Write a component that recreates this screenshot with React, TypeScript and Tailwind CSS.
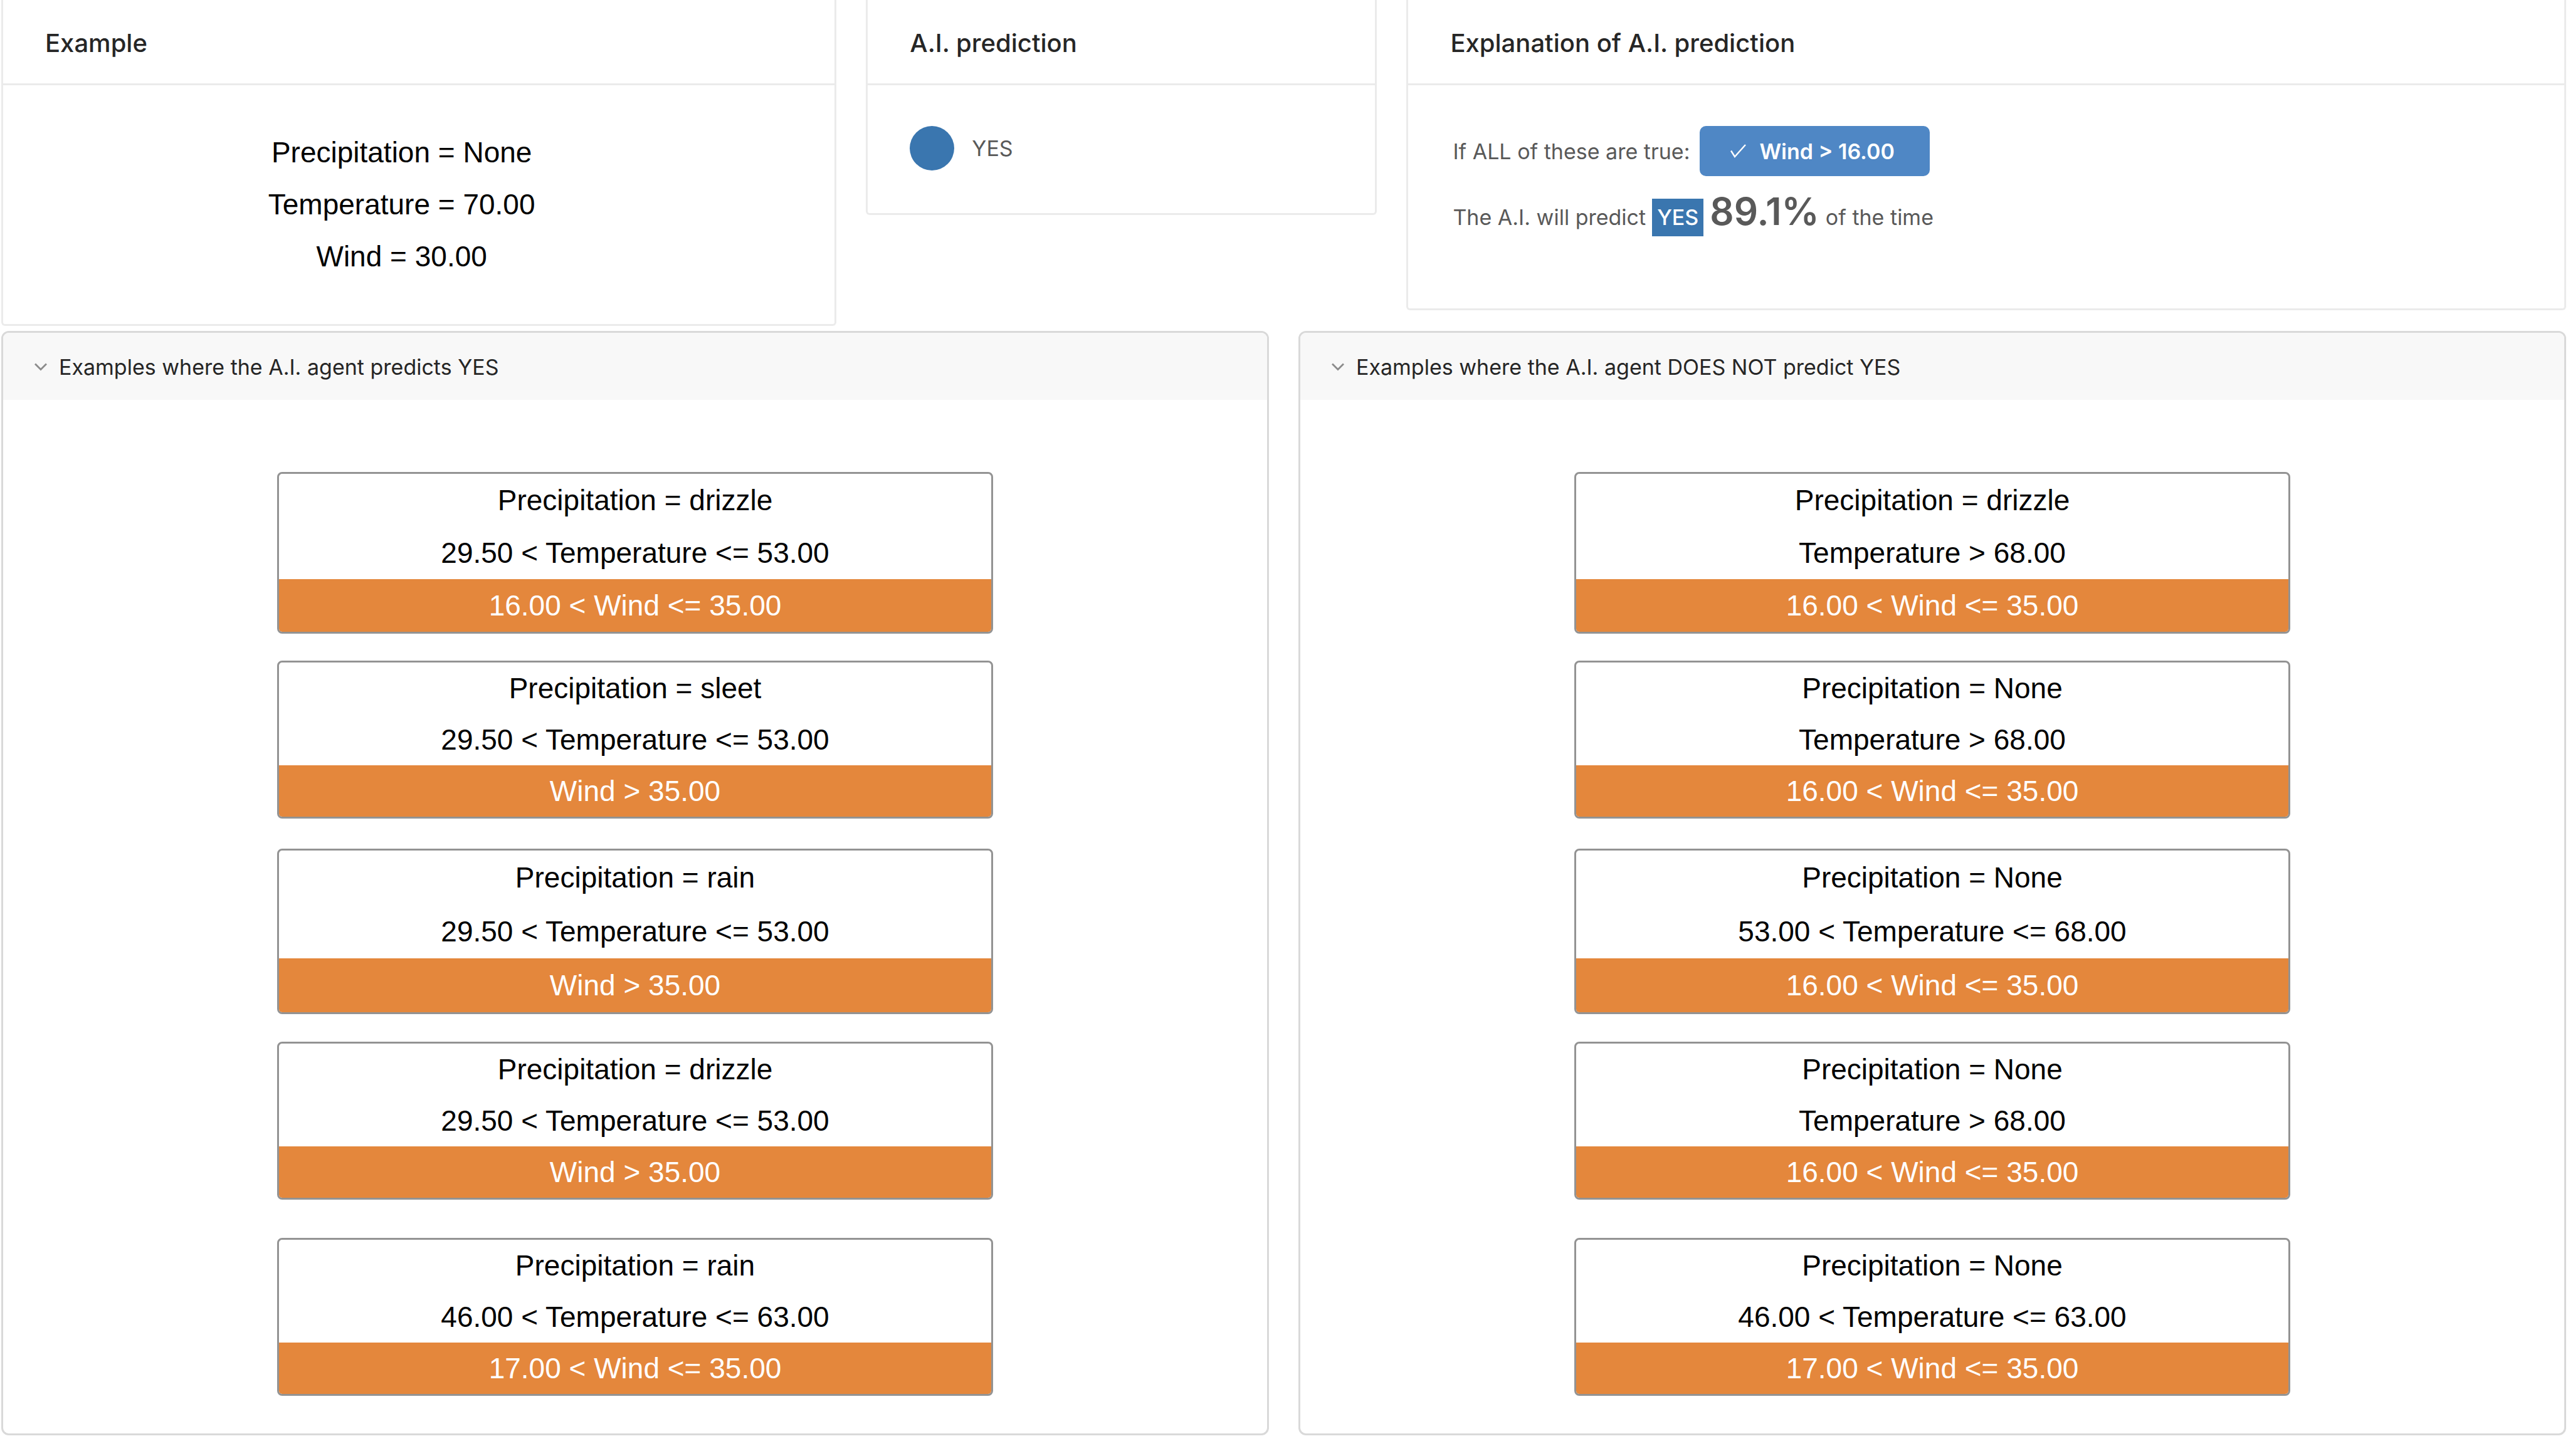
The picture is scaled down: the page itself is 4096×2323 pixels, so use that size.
import type { ReactNode } from "react";

type Example = {
  lines: [string, string];
  wind: string;
};

type Row = {
  spacing: string;
  leading: string;
  yes: Example;
  no: Example;
};

const rows: Row[] = [
  {
    spacing: "mt-[115px]",
    leading: "leading-[84px]",
    yes: { lines: ["Precipitation = drizzle", "29.50 < Temperature <= 53.00"], wind: "16.00 < Wind <= 35.00" },
    no: { lines: ["Precipitation = drizzle", "Temperature > 68.00"], wind: "16.00 < Wind <= 35.00" },
  },
  {
    spacing: "mt-[43px]",
    leading: "leading-[82px]",
    yes: { lines: ["Precipitation = sleet", "29.50 < Temperature <= 53.00"], wind: "Wind > 35.00" },
    no: { lines: ["Precipitation = None", "Temperature > 68.00"], wind: "16.00 < Wind <= 35.00" },
  },
  {
    spacing: "mt-[48px]",
    leading: "leading-[86px]",
    yes: { lines: ["Precipitation = rain", "29.50 < Temperature <= 53.00"], wind: "Wind > 35.00" },
    no: { lines: ["Precipitation = None", "53.00 < Temperature <= 68.00"], wind: "16.00 < Wind <= 35.00" },
  },
  {
    spacing: "mt-[44px]",
    leading: "leading-[82px]",
    yes: { lines: ["Precipitation = drizzle", "29.50 < Temperature <= 53.00"], wind: "Wind > 35.00" },
    no: { lines: ["Precipitation = None", "Temperature > 68.00"], wind: "16.00 < Wind <= 35.00" },
  },
  {
    spacing: "mt-[61px]",
    leading: "leading-[82px]",
    yes: { lines: ["Precipitation = rain", "46.00 < Temperature <= 63.00"], wind: "17.00 < Wind <= 35.00" },
    no: { lines: ["Precipitation = None", "46.00 < Temperature <= 63.00"], wind: "17.00 < Wind <= 35.00" },
  },
];

function CheckIcon() {
  return (
    <svg aria-hidden="true" viewBox="0 0 25 22" className="h-[22px] w-[25px]" fill="none" stroke="currentColor" strokeWidth="2.4">
      <path d="M1 10.5 L7 20 L24 1" />
    </svg>
  );
}

function ChevronIcon() {
  return (
    <svg aria-hidden="true" viewBox="0 0 20 13" className="h-[13px] w-[20px]" fill="none" stroke="currentColor" strokeWidth="2.8">
      <path d="M1 1.5 L10 10.5 L19 1.5" />
    </svg>
  );
}

function Card({ title, className, children }: { title: string; className: string; children: ReactNode }) {
  return (
    <section className={`self-start rounded-b-[6px] border-[3px] border-t-0 border-[#ebebeb] ${className}`}>
      <h2 className="border-b-[3px] border-[#ebebeb] px-[67px] pt-[38px] pb-[34px] text-[40px] leading-[61px] font-medium text-[#262626]">
        {title}
      </h2>
      {children}
    </section>
  );
}

function ExampleCard({ example, row }: { example: Example; row: Row }) {
  return (
    <li
      className={`w-[1142px] overflow-hidden rounded-[8px] border-[3px] border-[#939393] text-center font-['Liberation_Sans',sans-serif] text-[46px] text-black ${row.spacing} ${row.leading}`}
    >
      {example.lines.map((line) => (
        <p key={line}>{line}</p>
      ))}
      <p className="bg-[#e4873c] text-white">{example.wind}</p>
    </li>
  );
}

function Panel({ title, side }: { title: string; side: "yes" | "no" }) {
  return (
    <section className="flex-1 overflow-hidden rounded-[12px] border-[3px] border-[#d9d9d9] pb-[60px]">
      <h2>
        <button
          type="button"
          aria-expanded="true"
          className="flex h-[107px] w-full items-center gap-[19px] bg-[#f8f8f8] pt-[2px] pl-[50px] text-left text-[34px] leading-[54px] text-[#262626]"
        >
          <span className="text-[#8c8c8c]">
            <ChevronIcon />
          </span>
          {title}
        </button>
      </h2>
      <ul className="flex flex-col items-center">
        {rows.map((row, i) => (
          <ExampleCard key={i} example={row[side]} row={row} />
        ))}
      </ul>
    </section>
  );
}

export default function App() {
  return (
    <main className="min-h-screen bg-white pr-[3px] pl-[2px] font-['Inter',sans-serif]">
      <div className="grid h-[528px] grid-cols-24 gap-x-[47px]">
        <Card title="Example" className="col-span-8">
          <div className="pt-[66px] pr-[55px] pb-[66px] text-center font-['Liberation_Sans',sans-serif] text-[46px] leading-[83px] text-black">
            <p>Precipitation = None</p>
            <p>Temperature = 70.00</p>
            <p>Wind = 30.00</p>
          </div>
        </Card>
        <Card title="A.I. prediction" className="col-span-5">
          <div className="flex items-center gap-[28px] px-[67px] pt-[65px] pb-[68px] text-[34px] text-[#595959]">
            <span className="size-[71px] rounded-full bg-[#3a76af]" />
            YES
          </div>
        </Card>
        <Card title="Explanation of A.I. prediction" className="col-span-11">
          <div className="px-[71px] pt-[65px] pb-[107px] text-[34px] text-[#595959]">
            <div className="flex items-center gap-[16px]">
              If ALL of these are true:
              <button
                type="button"
                className="flex h-[80px] items-center gap-[21px] rounded-[10px] bg-[#4f87c5] pr-[56px] pl-[49px] font-semibold text-white"
              >
                <CheckIcon />
                Wind &gt; 16.00
              </button>
            </div>
            <p className="mt-[18px] flex items-baseline gap-[10px] leading-[76px]">
              The A.I. will predict
              <span className="bg-[#3a76af] px-[8px] leading-[60px] font-medium text-white">YES</span>
              <strong className="text-[60px] font-semibold">89.1%</strong>
              of the time
            </p>
          </div>
        </Card>
      </div>
      <div className="flex gap-[47px]">
        <Panel title="Examples where the A.I. agent predicts YES" side="yes" />
        <Panel title="Examples where the A.I. agent DOES NOT predict YES" side="no" />
      </div>
    </main>
  );
}
